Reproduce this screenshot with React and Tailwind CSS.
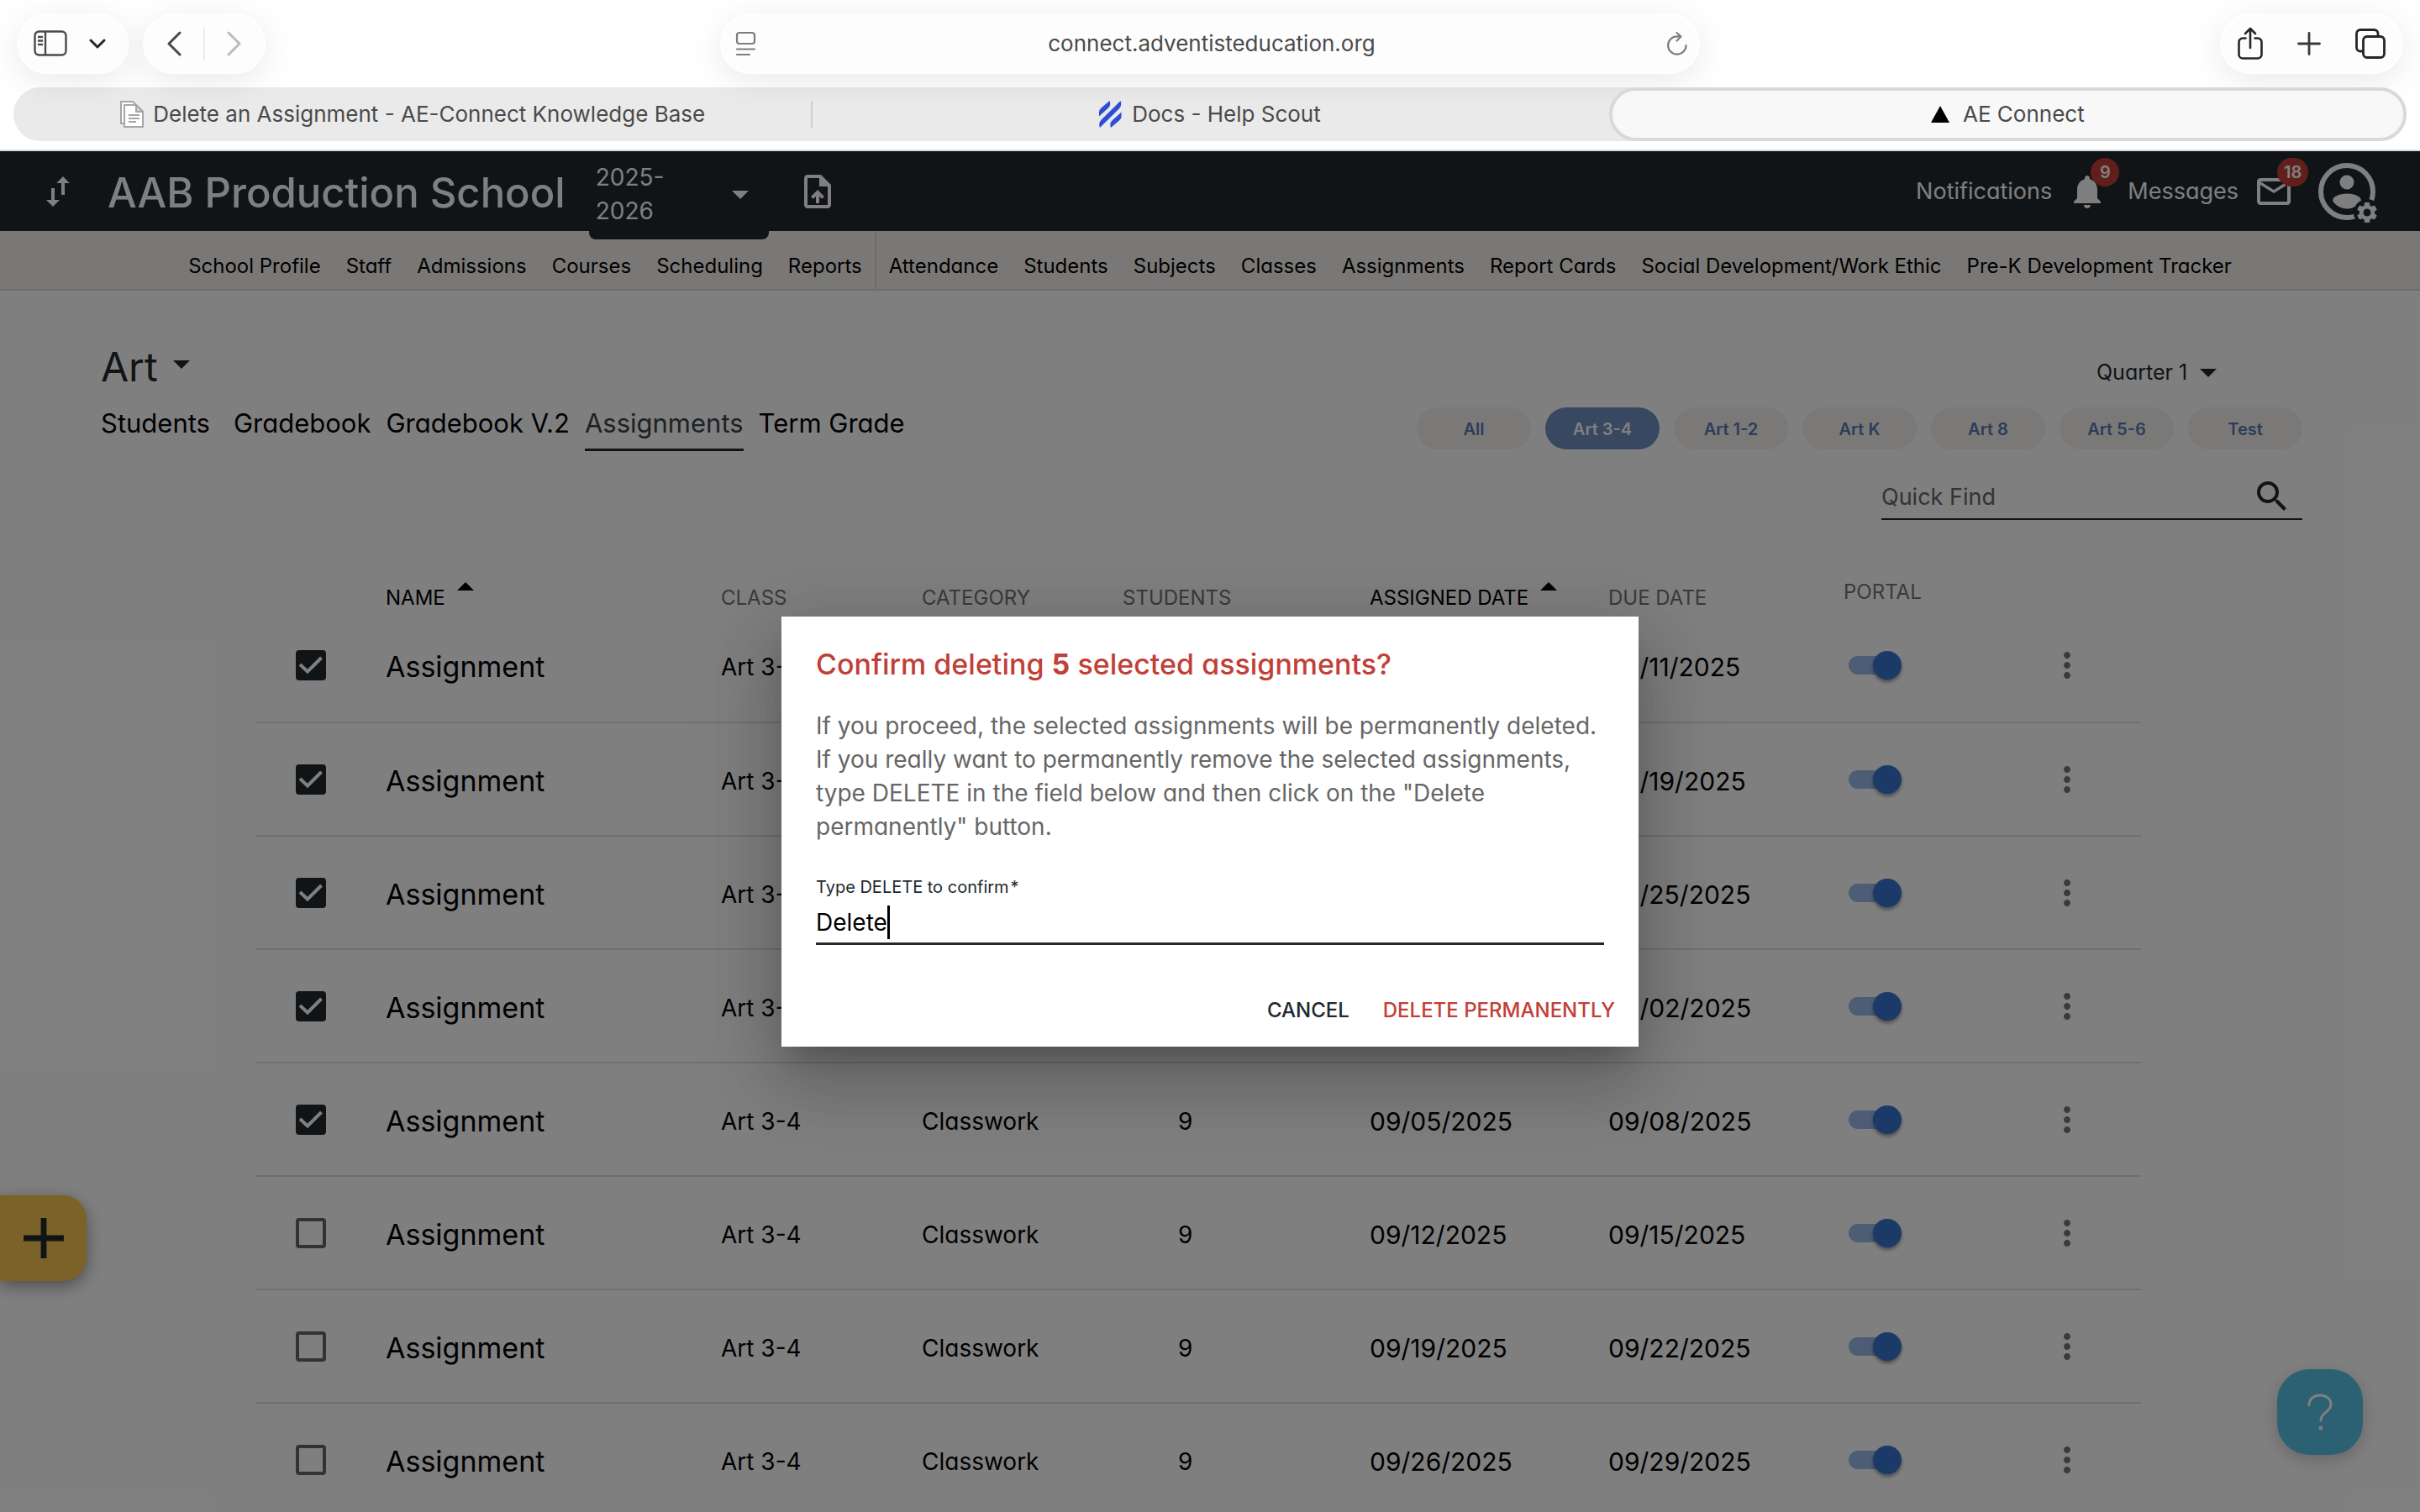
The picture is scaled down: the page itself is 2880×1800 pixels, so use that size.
import React, { useState } from 'react';
import {
  MdAdd,
  MdArrowDropDown,
  MdArrowDropUp,
  MdMailOutline,
  MdMoreVert,
  MdNotifications,
  MdOutlineUploadFile,
  MdSearch,
  MdSettings,
} from 'react-icons/md';

const adminLinks = ['School Profile', 'Staff', 'Admissions', 'Courses', 'Scheduling', 'Reports'];

const teacherLinks = [
  'Attendance',
  'Students',
  'Subjects',
  'Classes',
  'Assignments',
  'Report Cards',
  'Social Development/Work Ethic',
  'Pre-K Development Tracker',
];

const classFilters = ['All', 'Art 3-4', 'Art 1-2', 'Art K', 'Art 8', 'Art 5-6', 'Test'];

const assignments = [
  { id: 1, assigned: '08/08/2025', due: '08/11/2025', selected: true },
  { id: 2, assigned: '08/15/2025', due: '08/19/2025', selected: true },
  { id: 3, assigned: '08/22/2025', due: '08/25/2025', selected: true },
  { id: 4, assigned: '08/29/2025', due: '09/02/2025', selected: true },
  { id: 5, assigned: '09/05/2025', due: '09/08/2025', selected: true },
  { id: 6, assigned: '09/12/2025', due: '09/15/2025', selected: false },
  { id: 7, assigned: '09/19/2025', due: '09/22/2025', selected: false },
  { id: 8, assigned: '09/26/2025', due: '09/29/2025', selected: false },
];

const pill = 'flex h-18 items-center rounded-full border-2 border-white bg-[#fdfdfd] shadow-[0_8px_40px_rgba(0,0,0,0.09)]';

function BrowserToolbar() {
  return (
    <div className="grid grid-cols-[1fr_1166px_1fr] items-center px-5">
      <div className="flex gap-4">
        <div className={`${pill} w-[134px] justify-between pr-[26px] pl-[18px]`}>
          <button type="button" aria-label="Show sidebar">
            <svg width="40" height="32" viewBox="0 0 40 32" fill="none" stroke="#4a4a4a" strokeWidth="2.4">
              <rect x="1.5" y="1.5" width="37" height="28" rx="5" />
              <path d="M14 2v27M5 8h6M5 12.500h6M5 17h6" />
            </svg>
          </button>
          <button type="button" aria-label="Tab groups">
            <svg width="20" height="12" viewBox="0 0 20 12" fill="none" stroke="#262626" strokeWidth="3" strokeLinecap="round" strokeLinejoin="round">
              <path d="M2 2l8 8 8-8" />
            </svg>
          </button>
        </div>
        <div className={`${pill} w-[146px] justify-between px-[26px]`}>
          <button type="button" aria-label="Back">
            <svg width="18" height="30" viewBox="0 0 18 30" fill="none" stroke="#4a4a4a" strokeWidth="3" strokeLinecap="round" strokeLinejoin="round">
              <path d="M16 2L3 15l13 13" />
            </svg>
          </button>
          <span className="h-10 w-0.5 bg-[#ececec]" />
          <button type="button" aria-label="Forward">
            <svg width="18" height="30" viewBox="0 0 18 30" fill="none" stroke="#bcbcbc" strokeWidth="3" strokeLinecap="round" strokeLinejoin="round">
              <path d="M2 2l13 13L2 28" />
            </svg>
          </button>
        </div>
      </div>

      <div className={`${pill} justify-between pr-3 pl-4`}>
        <button type="button" aria-label="Reader">
          <svg width="26" height="30" viewBox="0 0 26 30" fill="none" stroke="#7d7d7d" strokeWidth="2.2" strokeLinecap="round">
            <rect x="2" y="2" width="21" height="13" rx="3" />
            <path d="M2 21.5h21M2 28h15" />
          </svg>
        </button>
        <span className="text-[26px] leading-8 text-[#4a4a4a]">connect.adventisteducation.org</span>
        <button type="button" aria-label="Reload">
          <svg width="26" height="30" viewBox="0 0 26 30" fill="none" stroke="#7d7d7d" strokeWidth="2.2" strokeLinecap="round" strokeLinejoin="round">
            <path d="M23.5 17a10.7 10.7 0 1 1-10.7-10.7h4M12.5 2l5 4.500-5 5" />
          </svg>
        </button>
      </div>

      <div className={`${pill} w-[218px] justify-between justify-self-end px-[18px]`}>
        <button type="button" aria-label="Share">
          <svg width="32" height="40" viewBox="0 0 32 40" fill="none" stroke="#262626" strokeWidth="2.6" strokeLinecap="round" strokeLinejoin="round">
            <path d="M10.5 13.5H7A4.5 4.5 0 0 0 2.5 18v15A4.5 4.5 0 0 0 7 37.5h18a4.5 4.5 0 0 0 4.5-4.5V18a4.5 4.5 0 0 0-4.5-4.5h-3.500M16 25V2.500M10 8l6-6 6 6" />
          </svg>
        </button>
        <button type="button" aria-label="New tab">
          <svg width="28" height="28" viewBox="0 0 28 28" fill="none" stroke="#3a3a3a" strokeWidth="2.8" strokeLinecap="round">
            <path d="M14 1.500v25M1.500 14h25" />
          </svg>
        </button>
        <button type="button" aria-label="Tab overview">
          <svg width="38" height="38" viewBox="0 0 38 38" fill="none" stroke="#262626" strokeWidth="2.8">
            <rect x="10.5" y="10.5" width="25" height="25" rx="4.5" />
            <path d="M10 28H7a4.5 4.5 0 0 1-4.5-4.5V7A4.5 4.5 0 0 1 7 2.500h16.500A4.5 4.5 0 0 1 28 7v3" />
          </svg>
        </button>
      </div>
    </div>
  );
}

function BrowserTabs() {
  return (
    <div className="mx-4 mt-4 grid h-16 grid-cols-3 rounded-full bg-[#eaeaea] text-[26px] leading-8 text-[#4a4a4a]">
      <button type="button" className="flex items-center justify-center gap-2.5">
        <svg width="30" height="34" viewBox="0 0 30 34" fill="#fff" stroke="#a6a6a6" strokeWidth="2">
          <path d="M6 28H2V2h14l3 3" />
          <path d="M6 6h14l8 8v18H6z" />
          <path d="M20 6v8h8z" fill="#d6d6d6" />
          <path d="M11 18h13M11 22h13M11 26h9" />
        </svg>
        Delete an Assignment - AE-Connect Knowledge Base
      </button>
      <button type="button" className="relative flex items-center justify-center gap-3">
        <span className="absolute top-4 left-0 h-8 w-0.5 bg-[#cfcfcf]" />
        <svg width="27" height="32" viewBox="0 0 27 32" fill="#304dd6">
          <path d="M0 18.5v-5c0-2 1-3.500 2.500-5L12.500 0c1.500 3.500.7 6.500-1.500 8.500z" />
          <path d="M1 32c-1.500-4-.6-7 1.500-9.200L25.500 0c1.500 4 .6 7-1.500 9.200z" />
          <path d="M14 32c-1.500-3.500-.7-6.500 1.500-8.500l11-10v5c0 2-1 3.500-2.500 5z" />
        </svg>
        Docs - Help Scout
      </button>
      <button type="button" className="flex items-center justify-center gap-4 rounded-full border-4 border-[#d9d9d9] bg-[#f8f8f8]">
        <svg width="22" height="20" viewBox="0 0 22 20"><path d="M11 0l11 20H0z" /></svg>
        AE Connect
      </button>
    </div>
  );
}

function Badge({ children }) {
  return (
    <span className="absolute -top-4 left-7 flex h-[34px] min-w-[34px] items-center justify-center rounded-full bg-[#c23f38] px-2 text-xl leading-6 font-semibold">
      {children}
    </span>
  );
}

function AppHeader() {
  return (
    <header className="flex h-[95px] items-center bg-[#21292e] pr-[50px] pl-[55px] text-white">
      <button type="button" aria-label="Switch school" className="mr-[45px]">
        <svg width="28" height="36" viewBox="0 0 28 36" fill="currentColor">
          <path d="M20 0l7.700 8H22v14h-4V8h-5.700zM8 36l-8-8h6V14h4v14h6z" />
        </svg>
      </button>
      <h1 className="pt-1 text-[49px] leading-14 font-medium">AAB Production School</h1>
      <button
        type="button"
        aria-haspopup="listbox"
        className="relative z-10 ml-7 flex w-[214px] items-center justify-between self-start rounded-b-lg bg-[#21292e] pt-[11px] pr-2.5 pb-3.5 pl-2 text-left text-[28px] leading-10"
      >
        <span className="w-24">2025-2026</span>
        <MdArrowDropDown size={48} />
      </button>
      <button type="button" aria-label="Upload file" className="ml-[34px]">
        <MdOutlineUploadFile size={48} />
      </button>

      <div className="ml-auto flex items-center text-[27px] leading-9">
        <a href="#notifications" className="flex items-center gap-[18px]">
          Notifications
          <span className="relative">
            <MdNotifications size={48} />
            <Badge>9</Badge>
          </span>
        </a>
        <a href="#messages" className="ml-6 flex items-center gap-[18px]">
          Messages
          <span className="relative">
            <MdMailOutline size={48} />
            <Badge>18</Badge>
          </span>
        </a>
        <button type="button" aria-label="Account" className="relative ml-7">
          <svg width="72" height="72" viewBox="0 0 72 72" fill="currentColor">
            <circle cx="35" cy="36" r="31" fill="none" stroke="currentColor" strokeWidth="6" />
            <circle cx="35" cy="25" r="8.5" />
            <path d="M18 47c0-5 8-8.500 17-8.500S52 42 52 47c-4 6-10 9.500-17 9.500S22 53 18 47z" />
            <circle cx="59" cy="61" r="16" fill="#21292e" />
          </svg>
          <MdSettings size={30} className="absolute -right-0.5 -bottom-1" />
        </button>
      </div>
    </header>
  );
}

function MainNav() {
  return (
    <nav className="flex h-[71px] justify-center border-b-2 border-[#dcdad5] bg-[#f4f1ed] text-2xl leading-8 text-black">
      <div className="flex items-center border-r-2 border-[#dcdad5] pt-3.5">
        {adminLinks.map(link => <a key={link} href="#admin" className="px-[15px]">{link}</a>)}
      </div>
      <div className="flex items-center pt-3.5">
        {teacherLinks.map(link => <a key={link} href="#teacher" className="px-[15px]">{link}</a>)}
      </div>
    </nav>
  );
}

function CourseHeader() {
  return (
    <div className="flex items-start justify-between">
      <div>
        <div className="flex h-14 items-center text-[#21292e]">
          <select aria-label="Course" className="appearance-none text-5xl leading-14">
            <option>Art</option>
          </select>
          <MdArrowDropDown size={48} className="mb-2 ml-1" />
        </div>
        <div className="mt-[19px] flex gap-[18px] text-[31px] leading-10 text-black">
          <a href="#students" className="mr-2.5">Students</a>
          <a href="#gradebook">Gradebook</a>
          <a href="#gradebook-v2">Gradebook V.2</a>
          <a href="#assignments" aria-current="page" className="border-b-[3px] border-[#21292e] pb-2.5 text-[#3c4348]">Assignments</a>
          <a href="#term-grade">Term Grade</a>
        </div>
      </div>

      <div className="flex flex-col items-end pt-[18px]">
        <div className="mr-[88px] flex h-8 items-center text-[#21292e]">
          <select aria-label="Term" className="appearance-none text-[25px] leading-8">
            <option>Quarter 1</option>
          </select>
          <MdArrowDropDown size={48} />
        </div>
        <div className="mt-[26px] flex gap-[17px]">
          {classFilters.map(name => (
            <button
              key={name}
              type="button"
              className={`h-[50px] w-[136px] rounded-full pt-0.5 text-xl leading-6 font-semibold ${name === 'Art 3-4' ? 'bg-[#7090c0] text-white' : 'bg-[#f6f3ef] text-[#567ab4]'}`}
            >
              {name}
            </button>
          ))}
        </div>
        <label className="mt-[30px] flex h-[54px] w-[501px] items-center justify-between border-b-2 border-[#21292e] text-[#21292e]">
          <input type="search" aria-label="Quick Find" placeholder="Quick Find" className="w-80 pt-0.5 text-[27px] leading-8 placeholder:text-[#666]" />
          <MdSearch size={48} className="mr-3" />
        </label>
      </div>
    </div>
  );
}

function AssignmentRow({ row }) {
  return (
    <tr className="h-[135px] border-b-2 border-[#e0e0e0] text-[28px] leading-9 text-black">
      <td className="pl-12">
        <span className="relative block size-9">
          <input
            type="checkbox"
            aria-label={`Select assignment due ${row.due}`}
            defaultChecked={row.selected}
            className="block size-9 appearance-none rounded border-4 border-[#666] checked:border-[#21292e] checked:bg-[#21292e]"
          />
          {row.selected && (
            <svg viewBox="0 0 36 36" className="pointer-events-none absolute inset-0" fill="none" stroke="#fff" strokeWidth="4">
              <path d="M5 17l9 8.500L30.500 9" />
            </svg>
          )}
        </span>
      </td>
      <td className="pt-1 text-[34px] leading-10">Assignment</td>
      <td className="pt-1">Art 3-4</td>
      <td className="pt-1">Classwork</td>
      <td className="pt-1 pl-[66px]">9</td>
      <td className="pt-1 text-[30px]">{row.assigned}</td>
      <td className="pt-1 text-[30px]">{row.due}</td>
      <td className="pl-1.5">
        <input
          type="checkbox"
          role="switch"
          aria-label="Show in portal"
          defaultChecked
          className="relative block h-[22px] w-14 appearance-none rounded-full bg-[#9abaea] before:absolute before:-top-1.5 before:-right-[7px] before:size-[34px] before:rounded-full before:bg-[#3874d0] before:shadow-[0_3px_4px_rgba(0,0,0,0.4)]"
        />
      </td>
      <td>
        <button type="button" aria-label="More actions" className="ml-[-38px] block text-[#757575]">
          <MdMoreVert size={48} />
        </button>
      </td>
    </tr>
  );
}

function AssignmentsTable() {
  return (
    <div className="mt-[66px] pr-48 pl-46">
      <table className="w-full table-fixed text-left">
        <colgroup>
          <col className="w-[155px]" />
          <col className="w-[399px]" />
          <col className="w-[239px]" />
          <col className="w-[239px]" />
          <col className="w-[294px]" />
          <col className="w-[284px]" />
          <col className="w-[280px]" />
          <col className="w-[280px]" />
          <col className="w-[74px]" />
        </colgroup>
        <thead>
          <tr className="h-10 align-bottom text-2xl leading-[26px] text-[#757575]">
            <th />
            <th className="font-normal text-black">
              <span className="flex">NAME <MdArrowDropUp size={48} className="-mt-6 -mb-1" /></span>
            </th>
            <th className="font-normal">CLASS</th>
            <th className="font-normal">CATEGORY</th>
            <th className="font-normal">STUDENTS</th>
            <th className="font-normal text-black">
              <span className="flex">ASSIGNED DATE <MdArrowDropUp size={48} className="-mt-6 -mb-1" /></span>
            </th>
            <th className="font-normal">DUE DATE</th>
            <th className="align-middle font-normal">PORTAL</th>
            <th />
          </tr>
        </thead>
        <tbody>
          {assignments.map(row => <AssignmentRow key={row.id} row={row} />)}
        </tbody>
      </table>
    </div>
  );
}

function DeleteDialog() {
  const [text, setText] = useState('Delete');

  return (
    <div className="absolute inset-0 z-20 flex items-center justify-center bg-black/50">
      <div
        role="dialog"
        aria-labelledby="delete-title"
        className="w-[1020px] bg-white pt-8 pb-[23px] shadow-[0_22px_30px_-14px_rgba(0,0,0,0.2),0_48px_76px_6px_rgba(0,0,0,0.14),0_18px_92px_16px_rgba(0,0,0,0.12)]"
      >
        <div className="px-[41px]">
          <h2 id="delete-title" className="text-[34px] leading-[50px] font-medium text-[#c23f38]">
            Confirm deleting <b>5</b> selected assignments?
          </h2>
          <p className="mt-7 text-[28px] leading-10 text-[#666]">
            If you proceed, the selected assignments will be permanently deleted. If you really want to permanently
            remove the selected assignments, type DELETE in the field below and then click on the "Delete permanently"
            button.
          </p>
          <label htmlFor="confirm" className="mt-10 block text-xl leading-6 text-[#21292e]">
            Type DELETE to confirm<span className="ml-0.5">*</span>
          </label>
          <div className="mt-2.5 flex items-center border-b-[3px] border-[#21292e] pb-1">
            <input
              id="confirm"
              value={text}
              onChange={e => setText(e.target.value)}
              className="field-sizing-content text-[28px] leading-10 text-black caret-transparent outline-none"
            />
            <span className="h-10 w-[3px] bg-black" />
          </div>
        </div>
        <div className="mt-[58px] flex h-10 items-center justify-end gap-10 pr-7 text-2xl leading-8 font-medium">
          <button type="button" className="text-[#21292e]">CANCEL</button>
          <button type="button" className="text-[#c23f38]">DELETE PERMANENTLY</button>
        </div>
      </div>
    </div>
  );
}

export default function App() {
  return (
    <div className="flex h-screen flex-col overflow-hidden bg-white font-[Inter,sans-serif]">
      <div className="border-b-2 border-[#d9dcdc] pt-4 pb-2.5">
        <BrowserToolbar />
        <BrowserTabs />
      </div>
      <div className="relative min-h-0 flex-1 overflow-hidden [font-feature-settings:'cv11']">
        <AppHeader />
        <MainNav />
        <main className="pt-[63px] pr-[140px] pl-[120px]">
          <CourseHeader />
          <AssignmentsTable />
        </main>
        <button
          type="button"
          aria-label="Add assignment"
          className="absolute bottom-[275px] left-0 flex h-[102px] w-[103px] items-center justify-center rounded-r-[28px] bg-[#f4c550] text-[#21292e] shadow-[0_6px_20px_rgba(0,0,0,0.4)]"
        >
          <MdAdd size={82} />
        </button>
        <button
          type="button"
          aria-label="Help"
          className="absolute right-[68px] bottom-[68px] flex size-[102px] items-center justify-center rounded-[38px] bg-[#58c0e6] text-white shadow-[0_6px_20px_rgba(0,0,0,0.2)]"
        >
          <svg width="32" height="44" viewBox="0 0 32 44" fill="none" stroke="currentColor" strokeWidth="3" strokeLinecap="round">
            <path d="M3 14C3 6 9 2 16 2s13 4 13 11c0 9-12 9-12 19" />
            <circle cx="17" cy="41" r="1" />
          </svg>
        </button>
        <DeleteDialog />
      </div>
    </div>
  );
}
